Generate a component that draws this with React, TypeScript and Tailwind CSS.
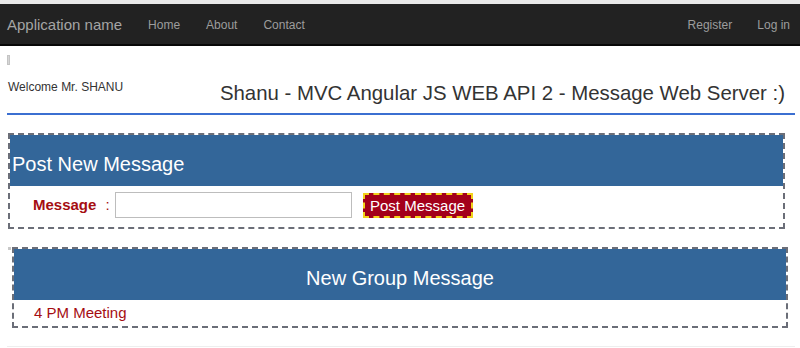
export default function App() {
  return (
    <div className="w-[800px] h-[348px] overflow-hidden bg-white font-['Liberation_Sans',Arial,sans-serif]">
      <div className="h-[4px] bg-[#e9e9e9]" />
      <nav className="h-[42px] bg-[#222222] border-b-2 border-[#080808] flex items-center px-[7px] pt-[2px] text-[#9d9d9d]">
        <span className="text-[15px] text-[#a5a5a5]">Application name</span>
        <div className="flex gap-[26px] ml-[26px] text-[12px]">
          <span>Home</span>
          <span>About</span>
          <span>Contact</span>
        </div>
        <div className="ml-auto flex gap-[25px] pr-[3px] text-[12px]">
          <span>Register</span>
          <span>Log in</span>
        </div>
      </nav>

      <div className="px-[7px] pr-[5px]">
        <div className="mt-[9px] w-[3px] h-[10px] bg-[#d6d6d6] border border-[#c4c4c4]" />

        <div className="mt-[14px] flex items-start justify-between pr-[10px] text-[#333]">
          <span className="text-[12px] leading-[16px] ml-[1px]">Welcome Mr. SHANU</span>
          <span className="text-[20.4px] leading-[28px]">
            Shanu - MVC Angular JS WEB API 2 - Message Web Server :)
          </span>
        </div>
        <div className="mt-[6px] h-[2px] bg-[#3b6fd1]" />

        <div className="mt-[18px] ml-[1px] mr-[10px] border-2 border-dashed border-[#6b6e78]">
          <div className="bg-[#336699] text-white text-[20px] leading-[28px] pt-[15px] pb-[8px] pl-[2px]">
            Post New Message
          </div>
          <div className="flex items-center pt-[6px] pb-[9px] pl-[23px]">
            <span className="text-[15px] font-bold text-[#a50d12]">Message</span>
            <span className="text-[15px] text-[#a50d12] ml-[9px]">:</span>
            <input
              className="ml-[5px] w-[237px] h-[26px] border border-[#bdbdbd] outline-none"
              type="text"
            />
            <button className="ml-[11px] w-[110px] h-[25px] bg-[#a3001b] border-2 border-dashed border-[#f2d21a] text-white text-[15px] leading-none">
              Post Message
            </button>
          </div>
        </div>

        <div className="mt-[18px] flex items-start">
          <div className="ml-[1px] w-[3px] h-[3px] bg-[#c8c8c8]" />
          <div className="ml-[1px] flex-1 mr-[7px] border-2 border-dashed border-[#6b6e78]">
            <div className="bg-[#336699] text-white text-[20px] leading-[28px] pt-[15px] pb-[8px] text-center">
              New Group Message
            </div>
            <div className="py-[3px] pl-[20px] text-[15px] leading-[20px] text-[#a50d12]">
              4 PM Meeting
            </div>
          </div>
        </div>

        <div className="mt-[18px] h-[1px] bg-[#eeeeee]" />
      </div>
    </div>
  )
}
